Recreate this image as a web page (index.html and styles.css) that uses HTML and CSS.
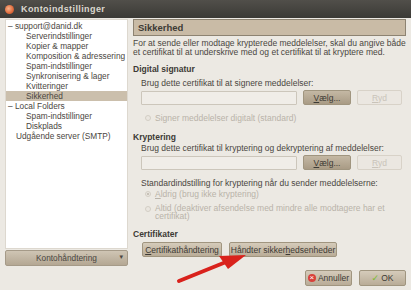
FILE: index.html
```html
<!DOCTYPE html>
<html lang="da">

<head>
  <meta charset="UTF-8" />
  <meta name="viewport" content="width=device-width, initial-scale=1.0" />
  <title>Kontoindstillinger</title>
  <link rel="stylesheet" href="styles.css">
</head>

<body>
  <div class="window">
    <div class="titlebar">
      <span class="app-icon"></span>
      <span class="title">Kontoindstillinger</span>
    </div>

    <div class="main">
      <!-- kontotræ -->
      <div class="sidebar">
        <ul class="tree">
          <li class="top">– support@danid.dk</li>
          <li class="child">Serverindstillinger</li>
          <li class="child">Kopier &amp; mapper</li>
          <li class="child">Komposition &amp; adressering</li>
          <li class="child">Spam-indstillinger</li>
          <li class="child">Synkronisering &amp; lager</li>
          <li class="child">Kvitteringer</li>
          <li class="child selected">Sikkerhed</li>
          <li class="top">– Local Folders</li>
          <li class="child">Spam-indstillinger</li>
          <li class="child">Diskplads</li>
          <li class="top leaf">Udgående server (SMTP)</li>
        </ul>
        <button class="account-btn">Kontohåndtering <span class="caret">▾</span></button>
      </div>

      <!-- sikkerhed -->
      <div class="content">
        <div class="page-title">Sikkerhed</div>
        <p class="intro">For at sende eller modtage krypterede meddelelser, skal du angive både et certifikat til at underskrive med og et certifikat til at kryptere med.</p>

        <h3 class="section sig">Digital signatur</h3>
        <div class="label">Brug dette certifikat til at signere meddelelser:</div>
        <div class="cert-row">
          <div class="field"></div>
          <button class="btn choose"><u>V</u>ælg...</button>
          <button class="btn clear" disabled><u>R</u>yd</button>
        </div>
        <div class="option check-line"><span class="box"></span>Signer meddelelser digitalt (standard)</div>

        <h3 class="section crypt">Kryptering</h3>
        <div class="label tight">Brug dette certifikat til kryptering og dekryptering af meddelelser:</div>
        <div class="cert-row">
          <div class="field"></div>
          <button class="btn choose"><u>V</u>ælg...</button>
          <button class="btn clear" disabled><u>R</u>yd</button>
        </div>
        <div class="label default">Standardindstilling for kryptering når du sender meddelelserne:</div>
        <div class="option radio-line first"><span class="radio on"></span><span><u>A</u>ldrig (brug ikke kryptering)</span></div>
        <div class="option radio-line second"><span class="radio"></span><span>Altid (deaktiver afsendelse med mindre alle modtagere har et certifikat)</span></div>

        <h3 class="section certs">Certifikater</h3>
        <div class="cert-buttons">
          <button class="btn manage"><u>C</u>ertifikathåndtering</button>
          <button class="btn devices">Håndter sikker<u>h</u>edsenheder</button>
        </div>

        <div class="dialog-buttons">
          <button class="btn dlg"><span class="cancel-icon">×</span>Annuller</button>
          <button class="btn dlg ok"><span class="ok-icon">✓</span>OK</button>
        </div>
      </div>
    </div>

    <svg class="arrow" width="411" height="290" viewBox="0 0 411 290">
      <path d="M179 281 L226 262" stroke="#d9221c" stroke-width="4" stroke-linecap="round" fill="none" />
      <path d="M246 255 L219 256 L228 269 Z" fill="#d9221c" />
    </svg>
  </div>
</body>

</html>
```

FILE: styles.css
```css
* {
  box-sizing: border-box;
}

body {
  margin: 0;
  background: #ece9e3;
  font-family: "Liberation Sans", "DejaVu Sans", sans-serif;
  font-size: 8.5px;
  color: #4a4641;
}

.window {
  width: 411px;
  height: 290px;
  overflow: hidden;
  position: relative;
}

.titlebar {
  height: 18px;
  background: linear-gradient(#514f4a, #3b3a36);
  display: flex;
  align-items: center;
  padding-left: 5px;
  gap: 7px;
}

.app-icon {
  width: 9px;
  height: 9px;
  border-radius: 50%;
  background: radial-gradient(circle at 40% 40%, #f7b28a, #df6a3a 60%, #a8482a);
}

.title {
  color: #dcd8cf;
  font-weight: bold;
  font-size: 9px;
  letter-spacing: 0.4px;
}

.main {
  display: flex;
  padding: 1px 0 0 5px;
}

.sidebar {
  width: 123px;
  display: flex;
  flex-direction: column;
}

.tree {
  margin: 0;
  padding: 1px 0 0 0;
  list-style: none;
  height: 230px;
  background: #fff;
  border: 1px solid #ddd8cf;
  font-size: 8.3px;
}

.tree li {
  height: 10px;
  line-height: 10px;
  white-space: nowrap;
}

.tree .top {
  padding-left: 2px;
}

.tree .leaf {
  padding-left: 10px;
}

.tree .child {
  padding-left: 20px;
}

.tree .selected {
  background: #cbbfac;
}

.account-btn {
  margin-top: 1px;
  height: 16px;
  font: inherit;
  font-size: 8.3px;
  color: #4a4641;
  border: 1px solid #a59a88;
  border-radius: 2px;
  background: linear-gradient(#cfc5b4, #b4a793);
  position: relative;
  padding: 0;
}

.caret {
  position: absolute;
  right: 4px;
  top: 2px;
  font-size: 7px;
}

.content {
  width: 273px;
  margin-left: 5px;
}

.page-title {
  height: 17px;
  background: #c9bba6;
  border: 1px solid #8d8372;
  font-weight: bold;
  font-size: 9.5px;
  line-height: 15px;
  padding-left: 4px;
  color: #3d3a35;
}

.intro {
  margin: 3px 0 0 0;
  line-height: 9px;
}

.section {
  margin: 0;
  font-size: 8.5px;
  font-weight: bold;
  line-height: 10px;
  color: #3d3a35;
}

.sig {
  margin-top: 7px;
}

.crypt {
  margin-top: 9px;
}

.certs {
  margin-top: 9px;
}

.label {
  margin: 4px 0 0 8px;
  line-height: 10px;
  white-space: nowrap;
}

.label.tight {
  margin-top: 1px;
}

.label.default {
  margin-top: 8px;
}

.cert-row {
  display: flex;
  align-items: center;
  margin: 2px 0 0 8px;
}

.field {
  width: 156px;
  height: 14px;
  background: #f0ede8;
  border: 1px solid #ccc6bb;
  border-radius: 1px;
}

.btn {
  font: inherit;
  height: 15px;
  padding: 0;
  color: #3d3a35;
  border: 1px solid #a0957f;
  border-radius: 2px;
  background: linear-gradient(#d5cbba, #b9ac97);
}

.btn u {
  text-decoration: underline;
}

.choose {
  width: 48px;
  margin-left: 6px;
  background: linear-gradient(#c4b8a4, #a99b85);
}

.clear {
  width: 45px;
  margin-left: 6px;
  color: #c9c3b9;
  border-color: #d8d2c8;
  background: #ebe7e1;
}

.option {
  color: #b9b3a9;
  line-height: 10px;
  margin-left: 12px;
  display: flex;
  gap: 4px;
}

.check-line {
  margin-top: 8px;
  align-items: center;
}

.box,
.radio {
  flex: none;
  width: 6px;
  height: 6px;
  border-radius: 50%;
  border: 1px solid #d3cec5;
  background: #eae6e0;
}

.radio {
  margin-top: 2px;
}

.radio.on {
  background: radial-gradient(#c7c1b7 35%, #eae6e0 45%);
}

.radio-line.first {
  margin-top: 1px;
}

.radio-line.second {
  margin-top: 5px;
  line-height: 8px;
  padding-right: 8px;
}

.cert-buttons {
  display: flex;
  gap: 7px;
  margin: 3px 0 0 9px;
}

.manage {
  width: 80px;
}

.devices {
  width: 108px;
}

.dialog-buttons {
  display: flex;
  justify-content: flex-end;
  gap: 7px;
  margin-top: 13px;
}

.dlg {
  width: 47px;
  height: 16px;
  display: flex;
  align-items: center;
  justify-content: center;
  gap: 2px;
}

.cancel-icon {
  width: 8px;
  height: 8px;
  border-radius: 50%;
  background: #d8413a;
  color: #fff;
  font-size: 8px;
  line-height: 8px;
  text-align: center;
}

.ok-icon {
  color: #7bbb2c;
  font-weight: bold;
  font-size: 9px;
}

.arrow {
  position: absolute;
  left: 0;
  top: 0;
  pointer-events: none;
}
```
